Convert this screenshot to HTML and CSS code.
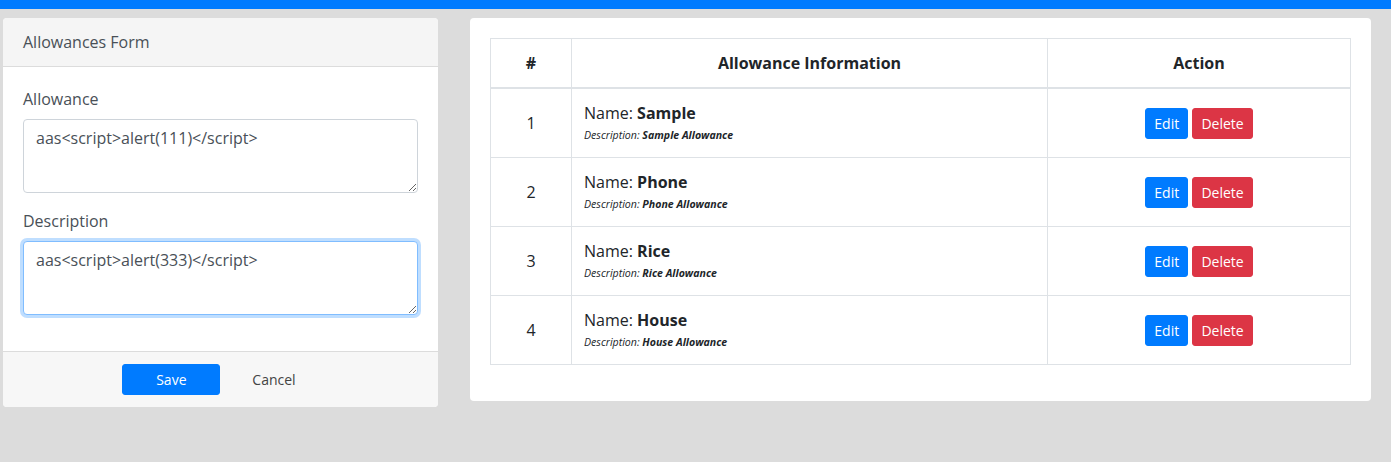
FILE: index.html
```html
<!DOCTYPE html>
<html lang="en">
<head>
<meta charset="utf-8">
<title>Allowances</title>
<link rel="stylesheet" href="styles.css">
</head>
<body>
<div class="topbar"></div>
<main class="page">
  <section class="card form-card">
    <header class="card-header">Allowances Form</header>
    <div class="card-body">
      <div class="form-group">
        <label class="form-label" for="allowance">Allowance</label>
        <textarea id="allowance" class="form-control">aas&lt;script&gt;alert(111)&lt;/script&gt;</textarea>
      </div>
      <div class="form-group">
        <label class="form-label" for="description">Description</label>
        <textarea id="description" class="form-control is-focused">aas&lt;script&gt;alert(333)&lt;/script&gt;</textarea>
      </div>
    </div>
    <footer class="card-footer">
      <button class="btn btn-primary btn-save">Save</button>
      <button class="btn btn-link">Cancel</button>
    </footer>
  </section>

  <section class="card table-card">
    <table class="table">
      <colgroup>
        <col class="col-num">
        <col class="col-info">
        <col class="col-action">
      </colgroup>
      <thead>
        <tr><th>#</th><th>Allowance Information</th><th>Action</th></tr>
      </thead>
      <tbody>
        <tr>
          <td class="num">1</td>
          <td class="info"><div class="name">Name: <b>Sample</b></div><div class="desc">Description: <b>Sample Allowance</b></div></td>
          <td class="action"><button class="btn btn-sm btn-primary">Edit</button> <button class="btn btn-sm btn-danger">Delete</button></td>
        </tr>
        <tr>
          <td class="num">2</td>
          <td class="info"><div class="name">Name: <b>Phone</b></div><div class="desc">Description: <b>Phone Allowance</b></div></td>
          <td class="action"><button class="btn btn-sm btn-primary">Edit</button> <button class="btn btn-sm btn-danger">Delete</button></td>
        </tr>
        <tr>
          <td class="num">3</td>
          <td class="info"><div class="name">Name: <b>Rice</b></div><div class="desc">Description: <b>Rice Allowance</b></div></td>
          <td class="action"><button class="btn btn-sm btn-primary">Edit</button> <button class="btn btn-sm btn-danger">Delete</button></td>
        </tr>
        <tr>
          <td class="num">4</td>
          <td class="info"><div class="name">Name: <b>House</b></div><div class="desc">Description: <b>House Allowance</b></div></td>
          <td class="action"><button class="btn btn-sm btn-primary">Edit</button> <button class="btn btn-sm btn-danger">Delete</button></td>
        </tr>
      </tbody>
    </table>
  </section>
</main>
</body>
</html>
```

FILE: styles.css
```css
* { box-sizing: border-box; }

html, body {
  margin: 0;
  height: 100%;
}

body {
  background: #dcdcdc;
  font-family: "Open Sans", "Liberation Sans", sans-serif;
  font-size: 16px;
  line-height: 24px;
  color: #212529;
}

.topbar {
  height: 9px;
  background: #007bff;
}

.page {
  display: flex;
  align-items: flex-start;
  gap: 32px;
  padding: 9px 20px 0 3px;
}

.card {
  background: #fff;
  border-radius: 4px;
  overflow: hidden;
}

.form-card {
  width: 435px;
  flex: none;
}

.card-header {
  background: #f5f5f5;
  border-bottom: 1px solid #dcdcdc;
  padding: 12px 20px;
  color: #495057;
}

.card-body {
  padding: 20px 20px;
}

.form-group {
  margin-bottom: 16px;
}

.form-label {
  display: block;
  margin-bottom: 8px;
  color: #495057;
}

.form-control {
  display: block;
  width: 100%;
  height: 74px;
  padding: 6px 12px;
  font-family: inherit;
  font-size: 16px;
  line-height: 24px;
  color: #495057;
  background: #fff;
  border: 1px solid #ced4da;
  border-radius: 4px;
  resize: vertical;
}

.form-control.is-focused {
  border-color: #80bdff;
  outline: none;
  box-shadow: 0 0 0 3px rgba(0, 123, 255, 0.25);
}

.card-footer {
  display: flex;
  justify-content: center;
  gap: 7px;
  padding: 12px 20px;
  background: #f7f7f7;
  border-top: 1px solid #dcdcdc;
}

.btn {
  display: inline-block;
  font-family: inherit;
  font-size: 14px;
  line-height: 21px;
  padding: 4px 8px;
  border: 1px solid transparent;
  border-radius: 3px;
  cursor: pointer;
  vertical-align: middle;
}

.btn-primary {
  background: #007bff;
  border-color: #007bff;
  color: #fff;
}

.btn-danger {
  background: #dc3545;
  border-color: #dc3545;
  color: #fff;
}

.btn-save {
  width: 98px;
  margin-left: 2px;
}

.btn-link {
  background: transparent;
  color: #444;
  padding: 4px 24px;
}

.table-card {
  width: 901px;
  flex: none;
  padding: 20px 20px 20px;
}

.table {
  width: 100%;
  border-collapse: collapse;
  margin-bottom: 16px;
  table-layout: fixed;
}

.col-num { width: 81px; }
.col-action { width: 303px; }

.table th,
.table td {
  border: 1px solid #dee2e6;
}

.table th {
  font-size: 16px;
  font-weight: 700;
  text-align: center;
  padding: 12px 12px 12px;
  border-bottom-width: 2px;
  line-height: 24px;
}

.table td {
  padding: 12px 12px;
  vertical-align: middle;
}

.num {
  text-align: center;
}

.name {
  line-height: 24px;
}

.desc {
  font-size: 10.6px;
  line-height: 19px;
  padding-top: 1px;
  font-style: italic;
}

.action {
  text-align: center;
}
```
